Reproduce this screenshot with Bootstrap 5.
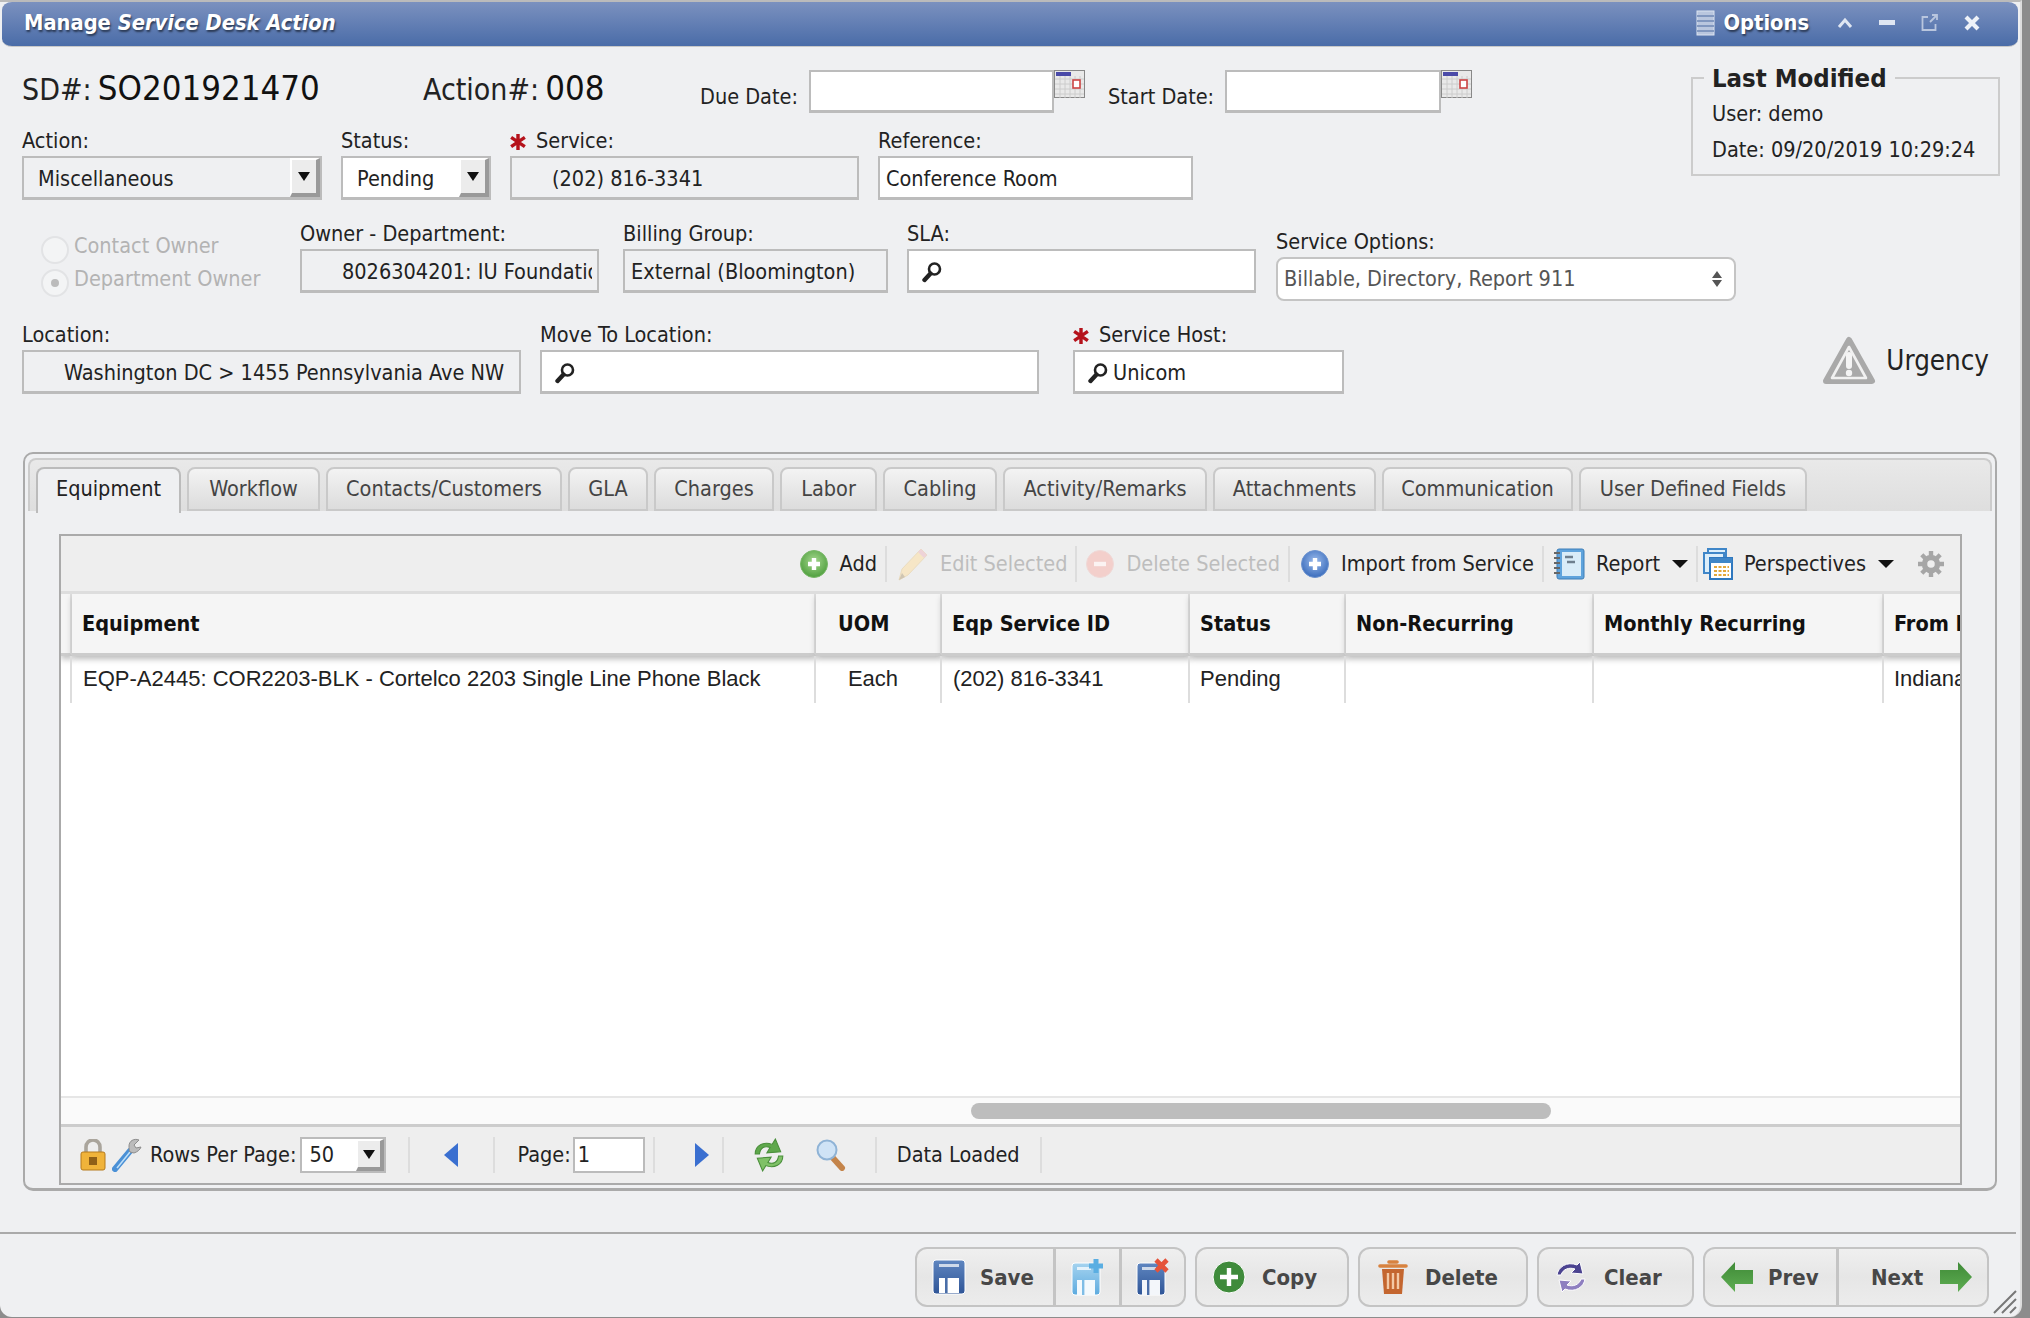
<!DOCTYPE html>
<html lang="en">
<head>
  <meta charset="UTF-8" />
  <title>Manage Service Desk Action</title>
  <link href="https://cdn.jsdelivr.net/npm/bootstrap@5.3.3/dist/css/bootstrap.min.css" rel="stylesheet" />
  <style>
    html, body { height: 100%; }
    body {
      background: #8c8c8c;
      font-family: "DejaVu Sans Condensed", "DejaVu Sans", sans-serif;
      font-size: 21.5px;
      color: #222;
      overflow: hidden;
    }
    .sd-window {
      width: 2022px;
      height: 1317px;
      background: #eff0f2;
      border-top: 2px solid #bbb;
      border-right: 2px solid #ddd;
      border-radius: 0 0 12px 12px;
      position: relative;
    }
    .title-bar {
      height: 45px;
      margin-left: 2px;
      margin-right: 2px;
      padding: 0 38px 2px 22px;
      background: linear-gradient(#7b91bf, #4a6ca8);
      border-bottom: 1px solid #c8c8c8;
      border-radius: 10px 10px 10px 10px / 8px 8px 8px 8px;
      color: #fff;
      font-weight: 700;
      font-size: 21.7px;
      text-shadow: 1px 2px 2px #2b3a55;
    }
    .title-gap { margin-left: 26px; }
    .form-area { padding: 23px 0 0 22px; }
    .top-left { width: 1669px; }
    .row-one { height: 42px; }
    .row-one .fld-box { height: 43px; }
    .sd-label { font-size: 30px; line-height: 40px; }
    .sd-value { font-size: 34.5px; line-height: 40px; color: #111; }
    .w-sd { width: 401px; margin-top: -2px; }
    .w-act { width: 277px; margin-top: -2px; }
    .w-duelbl { width: 109px; padding-top: 9px; line-height: 36px; }
    .w-due { width: 245px; }
    .w-startlbl { width: 117px; padding-top: 9px; line-height: 36px; margin-left: 23px; }
    .w-start { width: 216px; }
    .row-two { margin-top: 16px; gap: 19px; }
    .row-three { margin-top: 21px; height: 80px; }
    .row-four { margin-top: 21px; }
    .fld-label { height: 28px; line-height: 25px; white-space: nowrap; }
    .fld-box {
      height: 44px;
      line-height: 38px;
      border: 2px solid #bcbcbc;
      border-bottom-width: 3px;
      padding-left: 6px;
      padding-top: 2px;
      white-space: nowrap;
      overflow: hidden;
      display: flex;
      align-items: center;
    }
    .fld-ro { background: #eff0f2; }
    .fld-rw { background: #fff; }
    .pad-ro { padding-left: 40px; padding-right: 2px; }
    .pad-sel { padding-left: 14px; padding-top: 0; }
    .pad-find { padding-left: 12px; }
    .clip-text { overflow: hidden; min-width: 0; margin-right: 3px; }
    .sel-arrow {
      margin-left: auto;
      flex: none;
      width: 30px;
      height: 39px;
      background: #ececec;
      border-left: 2px solid #fff;
      border-top: 2px solid #fff;
      border-right: 4px solid #999;
      border-bottom: 4px solid #999;
      display: flex;
      align-items: center;
      justify-content: center;
    }
    .sel-text { padding-top: 2px; }
    .tri-down {
      width: 0;
      height: 0;
      border-left: 6px solid transparent;
      border-right: 6px solid transparent;
      border-top: 9px solid #111;
    }
    .w-action { width: 300px; }
    .w-status { width: 150px; }
    .w-service { width: 349px; }
    .w-ref { width: 315px; }
    .w-radios { width: 278px; padding: 15px 0 0 19px; color: #b3b3b3; }
    .radio-line { height: 33px; line-height: 19px; gap: 5px; }
    .radio-dot {
      width: 28px;
      height: 28px;
      border: 2px solid #e2e3e5;
      border-radius: 50%;
      background: #f3f4f5;
      flex: none;
      display: flex;
      align-items: center;
      justify-content: center;
    }
    .radio-dot i { width: 8px; height: 8px; border-radius: 50%; background: #bbb; display: block; }
    .w-owner { width: 299px; margin-right: 24px; }
    .w-billing { width: 265px; margin-right: 19px; }
    .w-sla { width: 349px; margin-right: 20px; }
    .w-options { width: 460px; margin-top: 8px; }
    .opt-select {
      height: 44px;
      border: 2px solid #c4c4c4;
      border-radius: 8px;
      background: #fff;
      color: #555;
      padding: 0 12px 0 6px;
    }
    .w-loc { width: 499px; margin-right: 19px; }
    .w-move { width: 499px; margin-right: 34px; }
    .w-host { width: 271px; }
    .urgency { font-size: 27.5px; gap: 10px; padding: 6px 31px 0 0; color: #222; align-self: flex-start; margin-top: 8px; }
    .last-mod {
      width: 309px;
      height: 116px;
      margin: -10px 0 0 0;
      border: 2px solid #ccc;
      padding: 0 0 0 19px;
    }
    .last-mod legend {
      float: none;
      width: auto;
      font-size: 25.5px;
      font-weight: 700;
      line-height: 36px;
      margin: 0 0 0 -8px;
      padding: 0 8px;
      color: #222;
      white-space: nowrap;
    }
    .mod-line { line-height: 36px; height: 36px; white-space: nowrap; }
    .tab-panel {
      margin: 58px 0 0 23px;
      width: 1974px;
      height: 739px;
      border: 2px solid #aaa;
      border-bottom-width: 3px;
      border-radius: 10px;
    }
    .tab-strip {
      margin: 4px 3px 0 3px;
      height: 53px;
      padding: 7px 0 0 6px;
      background: linear-gradient(#e9e9e9, #dedede);
      border: 2px solid #ccc;
      border-bottom: 0;
      border-radius: 8px 8px 0 0;
      gap: 6px;
      flex-wrap: nowrap;
    }
    .tab-strip .tab-link {
      display: block;
      height: 44px;
      line-height: 40px;
      text-align: center;
      color: #444;
      text-decoration: none;
      white-space: nowrap;
      background: linear-gradient(#f3f3f3, #dcdcdc);
      border: 2px solid #c9c9c9;
      border-radius: 8px 8px 0 0;
    }
    .tab-strip .tab-link.active { background: #eff0f2; color: #222; height: 46px; border-color: #bbb; border-bottom: 0; }
    .tab-strip li:nth-child(1) .tab-link { width: 145px; }
    .tab-strip li:nth-child(2) .tab-link { width: 133px; }
    .tab-strip li:nth-child(3) .tab-link { width: 236px; }
    .tab-strip li:nth-child(4) .tab-link { width: 80px; }
    .tab-strip li:nth-child(5) .tab-link { width: 120px; }
    .tab-strip li:nth-child(6) .tab-link { width: 97px; }
    .tab-strip li:nth-child(7) .tab-link { width: 114px; }
    .tab-strip li:nth-child(8) .tab-link { width: 204px; }
    .tab-strip li:nth-child(9) .tab-link { width: 163px; }
    .tab-strip li:nth-child(10) .tab-link { width: 191px; }
    .tab-strip li:nth-child(11) .tab-link { width: 228px; }
    .grid-box {
      margin: 23px 0 0 34px;
      width: 1903px;
      height: 651px;
      border: 2px solid #aaa;
      background: #fff;
      overflow: hidden;
    }
    .grid-tools {
      height: 58px;
      flex: none;
      background: #eee;
      border-bottom: 3px solid #ddd;
      padding: 1px 15px 0 0;
      white-space: nowrap;
    }
    .tool-item { gap: 11px; padding: 0 8px; height: 36px; border-right: 2px solid #ddd; }
    .tool-item.no-sep { border-right: 0; padding-left: 3px; }
    .tool-item.is-off { color: #bdbdbd; }
    .tool-item.tool-edit { padding-left: 10px; }
    .tool-item.tool-import { padding-left: 10px; }
    .tool-item.tool-report { padding-left: 9px; }
    .tool-caret { margin-left: 1px; border-top-width: 8px; border-left-width: 8px; border-right-width: 8px; }
    .tool-gear { margin-left: 15px; }
    .grid-wrap { overflow: hidden; flex: 1 1 auto; min-height: 0; background: #fff; }
    .grid-table { table-layout: fixed; width: 2060px; margin: 0; border-collapse: separate; border-spacing: 0; }
    .grid-table th, .grid-table td {
      padding: 0 10px;
      border: 0;
      border-right: 2px solid #ddd;
      white-space: nowrap;
      overflow: hidden;
      vertical-align: middle;
      background: transparent;
    }
    .grid-table th {
      height: 62px;
      padding-top: 2px;
      background: #f5f5f5;
      border-bottom: 3px solid #ccc;
      box-shadow: 0 3px 6px #bbb;
      font-weight: 700;
      color: #111;
    }
    .grid-table th.th-uom { padding-left: 22px; }
    .grid-table td { height: 47px; padding-bottom: 2px; font-family: "Liberation Sans", Arial, sans-serif; font-size: 22px; color: #222; }
    .grid-table td.td-first { padding-left: 11px; }
    .grid-table td.td-each { padding-right: 20px; text-align: center; }
    .scroll-track { height: 28px; flex: none; background: #fafafa; border-top: 2px solid #e6e6e6; padding: 5px 0 0 910px; }
    .scroll-thumb { width: 580px; height: 16px; border-radius: 8px; background: #bdbdbd; }
    .grid-pager {
      height: 59px;
      flex: none;
      background: #eee;
      border-top: 3px solid #ccc;
      padding-left: 19px;
      white-space: nowrap;
    }
    .pg-sep { width: 2px; height: 36px; background: #ddd; flex: none; }
    .pg-select { width: 86px; height: 36px; border: 2px solid #bbb; background: #fff; padding-left: 8px; display: flex; align-items: center; }
    .pg-select .sel-arrow { width: 28px; height: 32px; }
    .pg-input { width: 72px; height: 36px; border: 2px solid #bbb; background: #fff; padding-left: 3px; line-height: 32px; }
    .pg-wrench { margin-left: 6px; }
    .pg-rows { margin: 0 3px 0 8px; }
    .pg-s1 { margin-left: 22px; }
    .pg-prev { margin-left: 34px; }
    .pg-s2 { margin-left: 35px; }
    .pg-page { margin: 0 2px 0 23px; }
    .pg-s3 { margin-left: 8px; }
    .pg-next { margin-left: 40px; }
    .pg-s4 { margin-left: 13px; }
    .pg-refresh { margin-left: 27px; }
    .pg-lens { margin-left: 29px; }
    .pg-s5 { margin-left: 29px; }
    .pg-data { margin-left: 20px; }
    .pg-s6 { margin-left: 20px; }
    .foot-bar { margin-top: 41px; border-top: 2px solid #aaa; width: 2016px; height: 84px; padding: 13px 27px 0 0; }
    .act-group + .act-group { margin-left: 9px; }
    .act-btn {
      height: 60px;
      padding: 0;
      display: flex;
      align-items: center;
      justify-content: flex-start;
      font-size: 22px;
      font-weight: 700;
      color: #474747;
      background: linear-gradient(#efefef, #e6e6e6 50%, #ececec);
      border: 2px solid #c4c4c4;
      border-radius: 12px;
    }
    .w-save { width: 140px; padding-left: 15px; gap: 14px; }
    .w-saveadd { width: 67px; justify-content: center; }
    .w-savex { width: 66px; justify-content: center; }
    .w-copy { width: 154px; padding-left: 15px; gap: 16px; }
    .w-delete { width: 170px; padding-left: 18px; gap: 17px; }
    .w-clear { width: 157px; padding-left: 15px; gap: 16px; }
    .w-prev { width: 135px; padding-left: 15px; gap: 14px; }
    .w-next { width: 152px; padding-left: 32px; gap: 16px; }
    .grip { position: absolute; right: 2px; bottom: 2px; }
    .ico { flex: none; display: block; }
    .opt-ico { gap: 9px; }
    .req-star { display: inline-block; margin-right: 10px; }
  </style>
</head>
<body>
  <svg width="0" height="0" style="position:absolute">
    <defs>
      <radialGradient id="gGreen" cx="50%" cy="40%" r="60%"><stop offset="0" stop-color="#a6d88f"/><stop offset="1" stop-color="#4f9f3e"/></radialGradient>
      <radialGradient id="gBlue" cx="50%" cy="40%" r="60%"><stop offset="0" stop-color="#9cbcec"/><stop offset="1" stop-color="#3a6cbc"/></radialGradient>
      <linearGradient id="gSave" x1="0" y1="0" x2="0" y2="1"><stop offset="0" stop-color="#5f86c0"/><stop offset="1" stop-color="#2f5597"/></linearGradient>
      <linearGradient id="gSaveL" x1="0" y1="0" x2="0" y2="1"><stop offset="0" stop-color="#a5d3ef"/><stop offset="1" stop-color="#5dabdf"/></linearGradient>
      <linearGradient id="gArrow" x1="0" y1="0" x2="0" y2="1"><stop offset="0" stop-color="#3f8a37"/><stop offset="1" stop-color="#5fae53"/></linearGradient>
      <symbol id="find" viewBox="0 0 22 22"><circle cx="13.5" cy="8" r="5.5" fill="#fff" stroke="#222" stroke-width="2.6"/><path d="M9.5 12.5 3.5 19" stroke="#222" stroke-width="4.4" stroke-linecap="round"/></symbol>
      <symbol id="cal" viewBox="0 0 31 28"><rect x=".5" y=".5" width="30" height="27" fill="#e9e9e9" stroke="#888"/><rect x="2" y="2" width="15" height="4" fill="#4a4aa8"/><path d="M1 9h29M1 14h29M1 19h29M1 24h29M6 6v22M11 6v22M16 6v22M21 6v22M26 6v22" stroke="#ccc" stroke-width="1"/><rect x="19" y="10" width="7" height="8" fill="#fff" stroke="#c44" stroke-width="1.6"/></symbol>
      <symbol id="star" viewBox="0 0 14 14"><path d="M7 0v14M1 3l12 8M13 3 1 11" stroke="#b5121b" stroke-width="3"/></symbol>
      <symbol id="plusc" viewBox="0 0 30 30"><circle cx="15" cy="15" r="13.5" fill="url(#gGreen)" stroke="#79b868"/><path d="M15 9v12M9 15h12" stroke="#fff" stroke-width="4.4"/></symbol>
      <symbol id="plusb" viewBox="0 0 30 30"><circle cx="15" cy="15" r="13.5" fill="url(#gBlue)" stroke="#6d93cf"/><path d="M15 9v12M9 15h12" stroke="#fff" stroke-width="4.4"/></symbol>
      <symbol id="minusr" viewBox="0 0 30 30"><circle cx="15" cy="15" r="13.5" fill="#f3cfcb" stroke="#efd9d7"/><path d="M9 15h12" stroke="#fbf3f2" stroke-width="4.4"/></symbol>
      <symbol id="pencil" viewBox="0 0 32 34"><path d="M2 33 5 22 24 2l6 6-19 20z" fill="#f6e6c6" stroke="#eadcc0"/><path d="M24 2l6 6-3 3-6-6z" fill="#eed3d8"/><path d="M2 33 5 26l3 4z" fill="#cfc5b2"/></symbol>
      <symbol id="notebook" viewBox="0 0 32 32"><rect x="4" y="1" width="27" height="30" rx="2" fill="#5fa3dc" stroke="#3f7fb8"/><rect x="9" y="4" width="19" height="24" fill="#d9ecf8"/><path d="M12 9h8M14 14h8" stroke="#6e7f8e" stroke-width="2.4"/><path d="M1 5h6M1 10h6M1 15h6M1 20h6M1 25h6" stroke="#666" stroke-width="2"/></symbol>
      <symbol id="persp" viewBox="0 0 32 32"><rect x="7" y="1" width="18" height="20" fill="#dceefa" stroke="#3f86c8" stroke-width="2"/><rect x="3" y="5" width="20" height="20" fill="#dceefa" stroke="#3f86c8" stroke-width="2"/><rect x="9" y="10" width="22" height="21" fill="#fff" stroke="#2f78bf" stroke-width="2"/><rect x="9" y="10" width="22" height="5" fill="#3f86c8"/><path d="M13 19h15M13 23h15M13 27h15" stroke="#e3a83c" stroke-width="2.2" stroke-dasharray="3 1.5"/></symbol>
      <symbol id="gear" viewBox="0 0 28 28"><circle cx="14" cy="14" r="6.5" fill="none" stroke="#a6a6a6" stroke-width="5.5"/><path d="M14 1v6M14 21v6M1 14h6M21 14h6M4.8 4.8l4.2 4.2M19 19l4.2 4.2M23.2 4.8 19 9M9 19l-4.2 4.2" stroke="#a6a6a6" stroke-width="4.4"/></symbol>
      <symbol id="lock" viewBox="0 0 26 32"><path d="M6 14V8a7 7 0 0 1 14 0v6" fill="none" stroke="#aaa59c" stroke-width="3.6"/><rect x="1" y="13" width="24" height="18" rx="2" fill="#f0b33a" stroke="#b57b1d"/><rect x="9" y="18" width="8" height="8" fill="#8f5f17"/></symbol>
      <symbol id="wrench" viewBox="0 0 30 34"><path d="M3 31 18 13" stroke="#4a90d6" stroke-width="6" stroke-linecap="round"/><path d="M5 30 18 14" stroke="#bfe0f8" stroke-width="1.6"/><path d="M27 2c-5-2-10 1-10 6 0 2 0 4 1 6l4 1c3-1 6-3 7-6l-5 1-2-3z" fill="#bcbcbc" stroke="#8d8d8d"/></symbol>
      <symbol id="refresh" viewBox="4 1 28 32"><path d="M5 16C5 8 13 4 21 7l3-5 5 12-13 1 3-5C14 8 10 10 9 16z" fill="#5fa84c" stroke="#4a8f3b"/><path d="M31 18c0 8-8 12-16 9l-3 5-5-12 13-1-3 5c5 2 9 0 10-6z" fill="#7fc166" stroke="#4a8f3b"/></symbol>
      <symbol id="lens" viewBox="0 0 30 32"><path d="M17 19l9 10" stroke="#c4844a" stroke-width="6" stroke-linecap="round"/><circle cx="11" cy="11" r="9.5" fill="#cfe3f6" stroke="#8fb3d6" stroke-width="2"/></symbol>
      <symbol id="save" viewBox="0 0 34 36"><rect x="1" y="1" width="32" height="34" rx="3" fill="url(#gSave)" stroke="#fff"/><rect x="7" y="5" width="20" height="3" fill="#cfdaea"/><rect x="7" y="19" width="20" height="15" fill="#fff"/><rect x="13" y="19" width="2.6" height="15" fill="#4a6ea8"/></symbol>
      <symbol id="saveadd" viewBox="0 0 34 38"><rect x="1" y="5" width="28" height="32" rx="3" fill="url(#gSaveL)" stroke="#fff"/><rect x="6" y="9" width="14" height="3" fill="#e4f2fb"/><rect x="6" y="22" width="18" height="15" fill="#f3f9fd"/><rect x="11" y="22" width="2.4" height="15" fill="#7fbde6"/><path d="M25 1v14M18 8h14" stroke="#5aaee2" stroke-width="5"/></symbol>
      <symbol id="savex" viewBox="0 0 34 38"><rect x="1" y="5" width="28" height="32" rx="3" fill="url(#gSave)" stroke="#fff"/><rect x="6" y="9" width="14" height="3" fill="#cfdaea"/><rect x="6" y="22" width="18" height="15" fill="#f3f6fa"/><rect x="11" y="22" width="2.4" height="15" fill="#4a6ea8"/><path d="M20 2l11 11M31 2 20 13" stroke="#e5533a" stroke-width="4.6"/></symbol>
      <symbol id="copyp" viewBox="0 0 34 34"><circle cx="17" cy="17" r="16" fill="#3f8b3b" stroke="#fff"/><path d="M17 8v18M8 17h18" stroke="#fff" stroke-width="4.4"/></symbol>
      <symbol id="trash" viewBox="0 0 30 36"><path d="M11 3h8M2 7h26" stroke="#d8823f" stroke-width="3.6" stroke-linecap="round"/><path d="M4 10h22l-2 25H6z" fill="#c4662f"/><path d="M10 14v16M15 14v16M20 14v16" stroke="#f3c9a5" stroke-width="2.4"/></symbol>
      <symbol id="clear" viewBox="0 0 34 34"><path d="M3 15C4 7 13 1 23 5l3-3 3 12-12-1 4-4C15 7 9 9 7 15z" fill="#4b4390" stroke="#fff"/><path d="M31 19c-1 8-10 14-20 10l-3 3-3-12 12 1-4 4c6 2 12 0 14-6z" fill="#8e7fc0" stroke="#fff"/></symbol>
      <symbol id="aleft" viewBox="0 0 34 34"><path d="M1 17 15 2v8h18v14H15v8z" fill="url(#gArrow)"/></symbol>
      <symbol id="aright" viewBox="0 0 34 34"><path d="M33 17 19 2v8H1v14h18v8z" fill="url(#gArrow)"/></symbol>
      <symbol id="warn" viewBox="0 0 54 50"><path d="M27 4 50 45H4z" fill="#a9a9a9" stroke="#a9a9a9" stroke-width="6" stroke-linejoin="round"/><path d="M27 11 44 42H10z" fill="none" stroke="#f1f1f1" stroke-width="2.6" stroke-linejoin="round"/><path d="M27 19v11" stroke="#f4f4f4" stroke-width="6" stroke-linecap="round"/><circle cx="27" cy="37" r="3.2" fill="#f4f4f4"/></symbol>
    </defs>
  </svg>

  <div class="sd-window">
    <div class="title-bar d-flex align-items-center">
      <div>Manage <em>Service Desk Action</em></div>
      <div class="ms-auto d-flex align-items-center">
        <div class="d-flex align-items-center opt-ico me-4">
          <svg class="ico" width="19" height="26" viewBox="0 0 19 26"><rect x="1" y="1" width="17" height="24" fill="#b9c6de" stroke="#dbe3f0"/><path d="M1 6h17M1 11h17M1 16h17M1 21h17" stroke="#6f88b5" stroke-width="1.4"/></svg>
          <span>Options</span>
        </div>
        <svg class="ico ms-1" width="16" height="12" viewBox="0 0 16 12"><path d="M2 10 8 3l6 7" fill="none" stroke="#dfe6f2" stroke-width="3"/></svg>
        <svg class="ico title-gap" width="16" height="6" viewBox="0 0 16 6"><rect width="16" height="5" fill="#dfe6f2"/></svg>
        <svg class="ico title-gap" width="17" height="17" viewBox="0 0 17 17"><path d="M7 3H1.5v13h13V10M9 8l7-7M11 1h5v5" fill="none" stroke="#b9c6de" stroke-width="1.8"/></svg>
        <svg class="ico title-gap" width="16" height="16" viewBox="0 0 16 16"><path d="M2 2l12 12M14 2 2 14" stroke="#eef2f8" stroke-width="4.2"/></svg>
      </div>
    </div>

    <div class="form-area">
      <div class="d-flex">
        <div class="top-left">
          <div class="d-flex row-one">
            <div class="w-sd text-nowrap"><span class="sd-label">SD#:</span> <span class="sd-value">SO201921470</span></div>
            <div class="w-act text-nowrap"><span class="sd-label">Action#:</span> <span class="sd-value">008</span></div>
            <div class="w-duelbl text-nowrap">Due Date:</div>
            <div class="fld-box fld-rw w-due"></div>
            <svg class="ico" width="31" height="28"><use href="#cal"/></svg>
            <div class="w-startlbl text-nowrap">Start Date:</div>
            <div class="fld-box fld-rw w-start"></div>
            <svg class="ico" width="31" height="28"><use href="#cal"/></svg>
          </div>
          <div class="d-flex row-two">
            <div class="w-action">
              <div class="fld-label">Action:</div>
              <div class="fld-box fld-ro pad-sel pe-0"><span class="sel-text">Miscellaneous</span><span class="sel-arrow"><span class="tri-down"></span></span></div>
            </div>
            <div class="w-status">
              <div class="fld-label">Status:</div>
              <div class="fld-box fld-rw pad-sel pe-0"><span class="sel-text">Pending</span><span class="sel-arrow"><span class="tri-down"></span></span></div>
            </div>
            <div class="w-service">
              <div class="fld-label"><svg class="req-star" width="16" height="16"><use href="#star"/></svg>Service:</div>
              <div class="fld-box fld-ro pad-ro">(202) 816-3341</div>
            </div>
            <div class="w-ref">
              <div class="fld-label">Reference:</div>
              <div class="fld-box fld-rw">Conference Room</div>
            </div>
          </div>
        </div>
        <fieldset class="last-mod">
          <legend>Last Modified</legend>
          <div class="mod-line">User: demo</div>
          <div class="mod-line">Date: 09/20/2019 10:29:24</div>
        </fieldset>
      </div>

      <div class="d-flex row-three">
        <div class="w-radios">
          <div class="d-flex radio-line"><span class="radio-dot"></span><span>Contact Owner</span></div>
          <div class="d-flex radio-line"><span class="radio-dot"><i></i></span><span>Department Owner</span></div>
        </div>
        <div class="w-owner">
          <div class="fld-label">Owner - Department:</div>
          <div class="fld-box fld-ro pad-ro"><span class="clip-text">8026304201: IU Foundation</span></div>
        </div>
        <div class="w-billing">
          <div class="fld-label">Billing Group:</div>
          <div class="fld-box fld-ro">External (Bloomington)</div>
        </div>
        <div class="w-sla">
          <div class="fld-label">SLA:</div>
          <div class="fld-box fld-rw pad-find"><svg class="ico" width="22" height="22"><use href="#find"/></svg></div>
        </div>
        <div class="w-options">
          <div class="fld-label">Service Options:</div>
          <div class="opt-select d-flex align-items-center justify-content-between">
            <span>Billable, Directory, Report 911</span>
            <svg class="ico" width="10" height="16" viewBox="0 0 10 16"><path d="M5 0l5 7H0zM5 16 0 9h10z" fill="#555"/></svg>
          </div>
        </div>
      </div>

      <div class="d-flex row-four">
        <div class="w-loc">
          <div class="fld-label">Location:</div>
          <div class="fld-box fld-ro pad-ro">Washington DC &gt; 1455 Pennsylvania Ave NW</div>
        </div>
        <div class="w-move">
          <div class="fld-label">Move To Location:</div>
          <div class="fld-box fld-rw pad-find"><svg class="ico" width="22" height="22"><use href="#find"/></svg></div>
        </div>
        <div class="w-host">
          <div class="fld-label"><svg class="req-star" width="16" height="16"><use href="#star"/></svg>Service Host:</div>
          <div class="fld-box fld-rw pad-find"><svg class="ico me-1" width="22" height="22"><use href="#find"/></svg>Unicom</div>
        </div>
        <div class="urgency ms-auto d-flex align-items-center">
          <svg class="ico" width="54" height="50"><use href="#warn"/></svg>
          <span>Urgency</span>
        </div>
      </div>
    </div>

    <div class="tab-panel">
      <ul class="nav tab-strip">
        <li><a class="tab-link active" href="#">Equipment</a></li>
        <li><a class="tab-link" href="#">Workflow</a></li>
        <li><a class="tab-link" href="#">Contacts/Customers</a></li>
        <li><a class="tab-link" href="#">GLA</a></li>
        <li><a class="tab-link" href="#">Charges</a></li>
        <li><a class="tab-link" href="#">Labor</a></li>
        <li><a class="tab-link" href="#">Cabling</a></li>
        <li><a class="tab-link" href="#">Activity/Remarks</a></li>
        <li><a class="tab-link" href="#">Attachments</a></li>
        <li><a class="tab-link" href="#">Communication</a></li>
        <li><a class="tab-link" href="#">User Defined Fields</a></li>
      </ul>

      <div class="grid-box d-flex flex-column">
        <div class="grid-tools d-flex align-items-center justify-content-end">
          <div class="tool-item d-flex align-items-center"><svg class="ico" width="30" height="30"><use href="#plusc"/></svg><span>Add</span></div>
          <div class="tool-item tool-edit is-off d-flex align-items-center"><svg class="ico" width="32" height="34"><use href="#pencil"/></svg><span>Edit Selected</span></div>
          <div class="tool-item is-off d-flex align-items-center"><svg class="ico" width="30" height="30"><use href="#minusr"/></svg><span>Delete Selected</span></div>
          <div class="tool-item tool-import d-flex align-items-center"><svg class="ico" width="30" height="30"><use href="#plusb"/></svg><span>Import from Service</span></div>
          <div class="tool-item tool-report d-flex align-items-center"><svg class="ico" width="32" height="32"><use href="#notebook"/></svg><span>Report</span><span class="tri-down tool-caret"></span></div>
          <div class="tool-item no-sep d-flex align-items-center"><svg class="ico" width="32" height="32"><use href="#persp"/></svg><span>Perspectives</span><span class="tri-down tool-caret"></span></div>
          <svg class="ico tool-gear" width="28" height="28"><use href="#gear"/></svg>
        </div>

        <div class="grid-wrap">
          <table class="table grid-table">
            <colgroup>
              <col style="width:11px" /><col style="width:744px" /><col style="width:126px" /><col style="width:248px" /><col style="width:156px" /><col style="width:248px" /><col style="width:290px" /><col style="width:237px" />
            </colgroup>
            <thead>
              <tr><th class="p-0"></th><th>Equipment</th><th class="th-uom">UOM</th><th>Eqp Service ID</th><th>Status</th><th>Non-Recurring</th><th>Monthly Recurring</th><th>From Location</th></tr>
            </thead>
            <tbody>
              <tr><td class="p-0"></td><td class="td-first">EQP-A2445: COR2203-BLK - Cortelco 2203 Single Line Phone Black</td><td class="td-each">Each</td><td class="td-first">(202) 816-3341</td><td>Pending</td><td></td><td></td><td>Indianapolis</td></tr>
            </tbody>
          </table>
        </div>

        <div class="scroll-track"><div class="scroll-thumb"></div></div>

        <div class="grid-pager d-flex align-items-center">
          <svg class="ico" width="26" height="32"><use href="#lock"/></svg>
          <svg class="ico pg-wrench" width="30" height="34"><use href="#wrench"/></svg>
          <span class="pg-rows">Rows Per Page:</span>
          <div class="pg-select">50<span class="sel-arrow"><span class="tri-down"></span></span></div>
          <span class="pg-sep pg-s1"></span>
          <svg class="ico pg-prev" width="14" height="24" viewBox="0 0 14 24"><path d="M14 0v24L0 12z" fill="#3a6fd0"/></svg>
          <span class="pg-sep pg-s2"></span>
          <span class="pg-page">Page:</span>
          <div class="pg-input">1</div>
          <span class="pg-sep pg-s3"></span>
          <svg class="ico pg-next" width="14" height="24" viewBox="0 0 14 24"><path d="M0 0v24l14-12z" fill="#3a6fd0"/></svg>
          <span class="pg-sep pg-s4"></span>
          <svg class="ico pg-refresh" width="36" height="34"><use href="#refresh"/></svg>
          <svg class="ico pg-lens" width="30" height="32"><use href="#lens"/></svg>
          <span class="pg-sep pg-s5"></span>
          <span class="pg-data">Data Loaded</span>
          <span class="pg-sep pg-s6"></span>
        </div>
      </div>
    </div>

    <div class="foot-bar d-flex justify-content-end">
      <div class="btn-group act-group">
        <button type="button" class="btn act-btn w-save"><svg class="ico" width="34" height="36"><use href="#save"/></svg>Save</button>
        <button type="button" class="btn act-btn w-saveadd"><svg class="ico" width="34" height="38"><use href="#saveadd"/></svg></button>
        <button type="button" class="btn act-btn w-savex"><svg class="ico" width="34" height="38"><use href="#savex"/></svg></button>
      </div>
      <div class="btn-group act-group">
        <button type="button" class="btn act-btn w-copy"><svg class="ico" width="34" height="34"><use href="#copyp"/></svg>Copy</button>
      </div>
      <div class="btn-group act-group">
        <button type="button" class="btn act-btn w-delete"><svg class="ico" width="30" height="36"><use href="#trash"/></svg>Delete</button>
      </div>
      <div class="btn-group act-group">
        <button type="button" class="btn act-btn w-clear"><svg class="ico" width="34" height="34"><use href="#clear"/></svg>Clear</button>
      </div>
      <div class="btn-group act-group">
        <button type="button" class="btn act-btn w-prev"><svg class="ico" width="34" height="34"><use href="#aleft"/></svg>Prev</button>
        <button type="button" class="btn act-btn w-next">Next<svg class="ico" width="34" height="34"><use href="#aright"/></svg></button>
      </div>
    </div>

    <svg class="grip" width="26" height="26" viewBox="0 0 26 26"><path d="M2 24 24 2M10 24 24 10M18 24l6-6" stroke="#777" stroke-width="2"/></svg>
  </div>

  <script src="https://cdn.jsdelivr.net/npm/bootstrap@5.3.3/dist/js/bootstrap.bundle.min.js"></script>
</body>
</html>
